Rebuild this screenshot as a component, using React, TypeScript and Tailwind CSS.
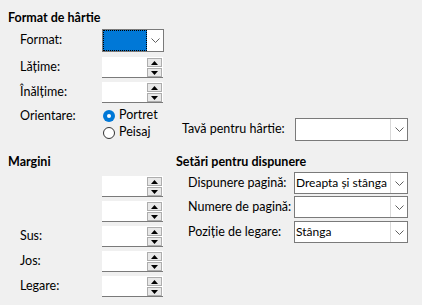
import React from "react";

function Chevron() {
  return (
    <svg width="9" height="5" viewBox="0 0 9 5" className="block">
      <path d="M0.5 0.5 L4.5 4.5 L8.5 0.5" fill="none" stroke="#606060" strokeWidth="1" />
    </svg>
  );
}

function Combo({ value, width }: { value?: string; width: string }) {
  return (
    <div className={`flex h-full ${width} border border-[#7a7a7a] bg-white`}>
      <div className="flex-1 pl-[1px] leading-[20px] text-[12px] whitespace-nowrap overflow-hidden">{value}</div>
      <div className="w-[17px] flex items-center justify-center border-l border-[#d9d9d9]">
        <Chevron />
      </div>
    </div>
  );
}

function Spin() {
  return (
    <div className="flex h-[21px] w-[61px] bg-white border-b border-[#7a7a7a]">
      <div className="flex-1" />
      <div className="w-[16px] flex flex-col gap-[1px] pt-[1px] pr-[1px]">
        <div className="h-[9px] border border-[#adadad] bg-[#e8e8e8] flex items-center justify-center">
          <svg width="7" height="4" viewBox="0 0 7 4"><path d="M0 4 L3.5 0 L7 4 Z" fill="#000" /></svg>
        </div>
        <div className="h-[9px] border border-[#adadad] bg-[#e8e8e8] flex items-center justify-center">
          <svg width="7" height="4" viewBox="0 0 7 4"><path d="M0 0 L3.5 4 L7 0 Z" fill="#000" /></svg>
        </div>
      </div>
    </div>
  );
}

function Radio({ checked }: { checked?: boolean }) {
  return checked ? (
    <div className="w-[12px] h-[12px] rounded-full bg-[#0078d7] flex items-center justify-center">
      <div className="w-[4px] h-[4px] rounded-full bg-white" />
    </div>
  ) : (
    <div className="w-[12px] h-[12px] rounded-full border border-[#333333] bg-white" />
  );
}

export default function App() {
  return (
    <div className="w-[422px] h-[305px] bg-[#f0f0f0] overflow-hidden text-[12.5px] text-black font-['Lato',sans-serif] whitespace-nowrap">
      {/* Format de hartie */}
      <div className="pt-[10px]">
        <div className="pl-[8px] h-[16px] leading-[16px] font-bold">Format de hârtie</div>

        <div className="flex items-center mt-[3px] h-[23px]">
          <div className="w-[102px] pl-[20px]">Format:</div>
          <div className="flex h-full w-[62px] border border-[#7a7a7a] bg-white">
            <div className="flex-1 bg-[#0078d7] border border-dotted border-black" />
            <div className="w-[16px] flex items-center justify-center">
              <Chevron />
            </div>
          </div>
        </div>

        <div className="flex items-center mt-[5px]">
          <div className="w-[102px] pl-[20px]">Lățime:</div>
          <Spin />
        </div>

        <div className="flex items-center mt-[4px]">
          <div className="w-[102px] pl-[20px]">Înălțime:</div>
          <Spin />
        </div>

        <div className="flex mt-[4px]">
          <div className="w-[102px] pl-[20px] h-[17px] leading-[17px]">Orientare:</div>
          <div className="w-[80px] flex flex-col">
            <div className="flex items-center h-[17px] gap-[4px] pl-[1px]">
              <Radio checked />
              <span>Portret</span>
            </div>
            <div className="flex items-center h-[17px] gap-[4px] pl-[1px]">
              <Radio />
              <span>Peisaj</span>
            </div>
          </div>
          <div className="flex items-center mt-[11px] h-[23px]">
            <div className="w-[113px]">Tavă pentru hârtie:</div>
            <Combo width="w-[113px]" />
          </div>
        </div>
      </div>

      {/* Margini + Setari */}
      <div className="flex mt-[13px]">
        <div className="w-[176px]">
          <div className="pl-[8px] h-[16px] leading-[16px] font-bold">Margini</div>
          <div className="flex flex-col gap-[4px] mt-[6px]">
            {["", "", "Sus:", "Jos:", "Legare:"].map((l, i) => (
              <div key={i} className="flex items-center">
                <div className="w-[102px] pl-[20px]">{l}</div>
                <Spin />
              </div>
            ))}
          </div>
        </div>
        <div className="flex-1">
          <div className="h-[16px] leading-[16px] font-bold">Setări pentru dispunere</div>
          <div className="flex items-center mt-[2px] h-[22px]">
            <div className="w-[118px] pl-[12px]">Dispunere pagină:</div>
            <Combo value="Dreapta și stânga" width="w-[114px]" />
          </div>
          <div className="flex items-center mt-[2px] h-[22px]">
            <div className="w-[118px] pl-[12px]">Numere de pagină:</div>
            <Combo width="w-[114px]" />
          </div>
          <div className="flex items-center mt-[3px] h-[22px]">
            <div className="w-[118px] pl-[12px]">Poziție de legare:</div>
            <Combo value="Stânga" width="w-[114px]" />
          </div>
        </div>
      </div>
    </div>
  );
}
